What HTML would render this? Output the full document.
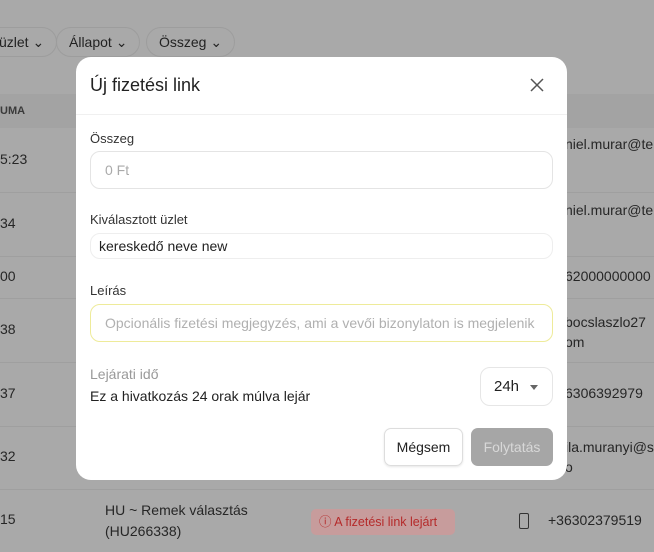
<!DOCTYPE html>
<html><head><meta charset="utf-8"><style>
*{box-sizing:border-box;margin:0;padding:0}
body{width:654px;height:552px;overflow:hidden;background:#a9a9a9;font-family:"Liberation Sans",sans-serif;position:relative;color:#2a2a2a}
.abs{position:absolute}
.pill{position:absolute;top:27px;height:30px;border:1px solid #9d9d9d;border-radius:15px;font-size:14px;line-height:28px;padding:0 12px;color:#222}
.line{position:absolute;left:0;right:0;height:1px;background:#9f9f9f}
.t{position:absolute;font-size:14px;color:#262626}
.modal{position:absolute;left:76px;top:57px;width:491px;height:423px;background:#fff;border-radius:15px;overflow:hidden}
.lbl{position:absolute;left:14px;font-size:13px;color:#333}
.inp{position:absolute;left:14px;width:463px;border:1px solid #e4e4e4;border-radius:10px;background:#fff;font-size:14px}
</style></head><body>
<div class="pill" style="left:-14px">üzlet ⌄</div>
<div class="pill" style="left:56px">Állapot ⌄</div>
<div class="pill" style="left:146px">Összeg ⌄</div>
<div class="abs" style="left:0;top:94px;width:654px;height:34px;background:#a3a3a3"></div>
<div class="t" style="left:0;top:105px;font-size:11px;font-weight:bold;color:#3a3a3a">UMA</div>
<div class="line" style="top:192px"></div>
<div class="line" style="top:256px"></div>
<div class="line" style="top:298px"></div>
<div class="line" style="top:362px"></div>
<div class="line" style="top:426px"></div>
<div class="line" style="top:489px"></div>
<div class="t" style="left:0;top:151px">5:23</div>
<div class="t" style="left:0;top:215px">34</div>
<div class="t" style="left:0;top:268px">00</div>
<div class="t" style="left:0;top:321px">38</div>
<div class="t" style="left:0;top:385px">37</div>
<div class="t" style="left:0;top:448px">32</div>
<div class="t" style="left:0;top:511px">15</div>
<div class="t" style="left:565px;top:136px">niel.murar@te</div>
<div class="t" style="left:565px;top:202px">niel.murar@te</div>
<div class="t" style="left:565px;top:268px">62000000000</div>
<div class="t" style="left:565px;top:312px;line-height:20px">bocslaszlo27<br>om</div>
<div class="t" style="left:565px;top:385px">6306392979</div>
<div class="t" style="left:565px;top:437px;line-height:20px">ila.muranyi@s<br>o</div>
<div class="t" style="left:105px;top:500px;line-height:21px">HU ~ Remek választás<br>(HU266338)</div>
<div class="abs" style="left:311px;top:509px;width:144px;height:26px;background:#c79c9c;border-radius:5px;color:#b52a2a;font-size:12.5px;line-height:26px;padding-left:8px">ⓘ A fizetési link lejárt</div>
<div class="abs" style="left:519px;top:513px;width:10px;height:16px;border:1.5px solid #333;border-radius:2px"></div>
<div class="t" style="left:548px;top:512px">+36302379519</div>

<div class="modal">
 <div class="abs" style="left:14px;top:18px;font-size:18px;color:#222">Új fizetési link</div>
 <svg class="abs" style="left:454px;top:21px" width="14" height="14" viewBox="0 0 14 14"><path d="M1 1L13 13M13 1L1 13" stroke="#555" stroke-width="1.5"/></svg>
 <div class="abs" style="left:0;top:57px;width:491px;height:1px;background:#f0f0f0"></div>
 <div class="lbl" style="top:74px">Összeg</div>
 <div class="inp" style="top:94px;height:38px;line-height:36px;padding-left:14px;color:#aaa">0 Ft</div>
 <div class="lbl" style="top:155px">Kiválasztott üzlet</div>
 <div class="inp" style="top:176px;height:26px;line-height:24px;padding-left:8px;color:#222;border-color:#eee">kereskedő neve new</div>
 <div class="lbl" style="top:226px">Leírás</div>
 <div class="inp" style="top:247px;height:38px;line-height:36px;padding-left:14px;color:#b0b0b0;border-color:#eeeb9a;white-space:nowrap;overflow:hidden">Opcionális fizetési megjegyzés, ami a vevői bizonylaton is megjelenik</div>
 <div class="abs" style="left:14px;top:309px;font-size:14px;color:#999">Lejárati idő</div>
 <div class="abs" style="left:14px;top:331px;font-size:14px;color:#222">Ez a hivatkozás 24 orak múlva lejár</div>
 <div class="abs" style="left:404px;top:310px;width:73px;height:39px;border:1px solid #e6e6e6;border-radius:10px;font-size:15px;line-height:37px;padding-left:13px;color:#222">24h<span style="position:absolute;left:49px;top:17px;border:4px solid transparent;border-top:5px solid #666;width:0;height:0"></span></div>
 <div class="abs" style="left:308px;top:371px;width:79px;height:38px;border:1px solid #ddd;border-radius:7px;font-size:14px;line-height:36px;text-align:center;color:#222;box-shadow:0 1px 2px rgba(0,0,0,.1)">Mégsem</div>
 <div class="abs" style="left:395px;top:371px;width:82px;height:38px;background:#a6a6a6;border-radius:7px;font-size:14px;line-height:38px;text-align:center;color:#d8d8d8">Folytatás</div>
</div>
</body></html>
